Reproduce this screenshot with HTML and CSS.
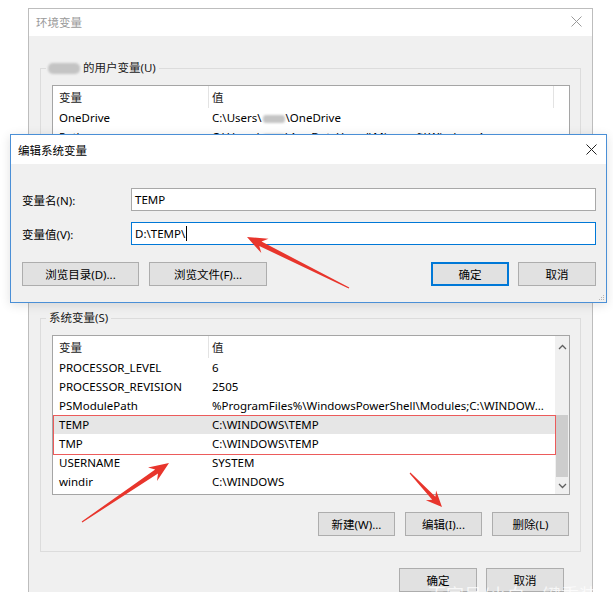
FILE: index.html
```html
<!DOCTYPE html>
<html lang="zh-CN">
<head>
<meta charset="utf-8">
<title>环境变量</title>
<link rel="stylesheet" href="styles.css">
</head>
<body>
<div class="desk">
  <div class="win-main">
    <div class="tb">
      <span class="tb-title">环境变量</span>
      <svg class="x-icon" width="11" height="11" viewBox="0 0 11 11"><path d="M0.5 0.5L10.5 10.5M10.5 0.5L0.5 10.5" stroke="#9a9a9a" stroke-width="1" fill="none"/></svg>
    </div>
    <div class="win-body">
      <fieldset class="grp grp-user">
        <legend><span class="blur blur-name"></span>的用户变量(U)</legend>
        <div class="list list-user">
          <div class="hdr hdr-user">
            <div class="hc hc-name">变量</div>
            <div class="hc hc-val">值</div>
            <div class="hc"></div>
          </div>
          <div class="row"><div class="c-name">OneDrive</div><div class="c-val">C:\Users\<span class="blur blur-user"></span>\OneDrive</div></div>
          <div class="row"><div class="c-name">Path</div><div class="c-val">C:\Users\<span class="blur blur-user"></span>\AppData\Local\Microsoft\WindowsApps;</div></div>
        </div>
        <div class="btns btns-hidden">
          <button class="btn">新建(N)...</button>
          <button class="btn">编辑(E)...</button>
          <button class="btn">删除(D)</button>
        </div>
      </fieldset>

      <fieldset class="grp grp-sys">
        <legend>系统变量(S)</legend>
        <div class="list list-sys">
          <div class="tbl">
            <div class="hdr hdr-sys">
              <div class="hc hc-name">变量</div>
              <div class="hc">值</div>
            </div>
            <div class="row"><div class="c-name">PROCESSOR_LEVEL</div><div class="c-val">6</div></div>
            <div class="row"><div class="c-name">PROCESSOR_REVISION</div><div class="c-val">2505</div></div>
            <div class="row"><div class="c-name">PSModulePath</div><div class="c-val">%ProgramFiles%\WindowsPowerShell\Modules;C:\WINDOW...</div></div>
            <div class="row sel"><div class="c-name">TEMP</div><div class="c-val">C:\WINDOWS\TEMP</div></div>
            <div class="row"><div class="c-name">TMP</div><div class="c-val">C:\WINDOWS\TEMP</div></div>
            <div class="row"><div class="c-name">USERNAME</div><div class="c-val">SYSTEM</div></div>
            <div class="row"><div class="c-name">windir</div><div class="c-val">C:\WINDOWS</div></div>
          </div>
          <div class="sb">
            <div class="sb-btn sb-up"><svg width="9" height="6" viewBox="0 0 9 6"><path d="M1 5L4.5 1.5L8 5" stroke="#606060" stroke-width="1.3" fill="none"/></svg></div>
            <div class="sb-track"><div class="sb-thumb"></div></div>
            <div class="sb-btn sb-down"><svg width="9" height="6" viewBox="0 0 9 6"><path d="M1 1L4.5 4.5L8 1" stroke="#606060" stroke-width="1.3" fill="none"/></svg></div>
          </div>
        </div>
        <div class="btns">
          <button class="btn">新建(W)...</button>
          <button class="btn">编辑(I)...</button>
          <button class="btn">删除(L)</button>
        </div>
      </fieldset>

      <div class="footer">
        <button class="btn btn-wide">确定</button>
        <button class="btn btn-wide">取消</button>
      </div>
    </div>
  </div>

  <div class="dlg">
    <div class="tb dlg-tb">
      <span>编辑系统变量</span>
      <svg class="x-icon" width="11" height="11" viewBox="0 0 11 11"><path d="M0.5 0.5L10.5 10.5M10.5 0.5L0.5 10.5" stroke="#222" stroke-width="1" fill="none"/></svg>
    </div>
    <div class="dlg-body">
      <div class="field">
        <label>变量名(N):</label>
        <div class="input">TEMP</div>
      </div>
      <div class="field">
        <label>变量值(V):</label>
        <div class="input focus">D:\TEMP\<span class="caret"></span></div>
      </div>
      <div class="dlg-btns">
        <button class="btn btn-browse">浏览目录(D)...</button>
        <button class="btn btn-browse btn-browse2">浏览文件(F)...</button>
        <button class="btn btn-default">确定</button>
        <button class="btn btn-wide">取消</button>
      </div>
    </div>
    <svg class="grip" width="7" height="7" viewBox="0 0 7 7"><g fill="#b5b5b5"><rect x="5" y="1" width="1" height="1"/><rect x="3" y="3" width="1" height="1"/><rect x="5" y="3" width="1" height="1"/><rect x="1" y="5" width="1" height="1"/><rect x="3" y="5" width="1" height="1"/><rect x="5" y="5" width="1" height="1"/></g></svg>
  </div>

  <svg class="anno" width="613" height="592" viewBox="0 0 613 592">
    <rect x="53.5" y="415.5" width="502" height="39" fill="none" stroke="#ec5b5b" stroke-width="1"/>
    <g fill="#e8352c">
      <polygon points="247,237 268.5,238.8 261.5,241.5 349.3,287.5 348.7,288.5 259.3,246 261.3,253.1"/>
      <polygon points="169,463 157,480.9 158,473.5 82.3,522.5 81.7,521.5 155.2,469.4 148,467.6"/>
      <polygon points="442,507 425.9,500.2 432.2,499.8 409.6,473.4 410.4,472.6 435.4,496.8 436.1,490.6"/>
    </g>
  </svg>

  <div class="watermark">百家号/小白一键重装系统</div>
</div>
</body>
</html>
```

FILE: styles.css
```css
html, body {
  margin: 0;
  padding: 0;
  background: #ffffff;
}

body {
  font-family: "Noto Sans", "Noto Sans CJK SC", sans-serif;
  font-size: 11.5px;
  color: #000;
}

.desk {
  position: relative;
  width: 613px;
  height: 592px;
  overflow: hidden;
  background: #ffffff;
}

/* ---------- main window ---------- */
.win-main {
  position: absolute;
  left: 28px;
  top: 8px;
  width: 565px;
  height: 620px;
  box-sizing: border-box;
  border: 1px solid #bdbdbd;
  background: #f0f0f0;
}

.tb {
  display: flex;
  align-items: center;
  justify-content: space-between;
  background: #ffffff;
}

.win-main .tb {
  height: 27px;
  padding: 0 10px 2px 7px;
  box-sizing: border-box;
  color: #9a9a9a;
}

.x-icon {
  display: block;
}

.win-body {
  padding: 24px 11px 0 11px;
}

.grp {
  margin: 0;
  min-width: 0;
  border: 1px solid #dcdcdc;
  padding: 9px 10px 12px 5px;
}

.grp-sys {
  margin-top: 11px;
  padding-bottom: 15px;
}

.grp legend {
  padding: 0 3px;
  line-height: 16px;
  color: #1a1a1a;
}

.blur {
  display: inline-block;
  background: #c4c4c4;
  filter: blur(1.2px);
  vertical-align: middle;
}

.blur-name {
  width: 32px;
  height: 11px;
  border-radius: 5px;
  margin-right: 3px;
  margin-left: -1px;
}

.blur-user {
  width: 22px;
  height: 8px;
  border-radius: 3px;
  margin: 0 1px;
}

/* ---------- list views ---------- */
.list {
  margin-left: 6px;
  border: 1px solid #a5a5a5;
  background: #ffffff;
  box-sizing: border-box;
  height: 160px;
  overflow: hidden;
}

.list-sys {
  display: flex;
}

.tbl {
  flex: 1;
  min-width: 0;
}

.hdr {
  display: grid;
  height: 22px;
  align-items: stretch;
  color: #1a1a1a;
}

.hdr-user {
  grid-template-columns: 156px 345px 1fr;
}

.hdr-sys {
  grid-template-columns: 156px 1fr;
}

.hc {
  display: flex;
  align-items: center;
  padding-left: 6px;
  padding-bottom: 1px;
  box-sizing: border-box;
}

.hc-name {
  border-right: 1px solid #e3e3e3;
}

.hc-val {
  border-right: 1px solid #e3e3e3;
}

.hdr .hc + .hc {
  padding-left: 3px;
}

.row {
  display: grid;
  grid-template-columns: 156px 1fr;
  height: 19px;
  align-items: center;
  white-space: nowrap;
}

.row.sel {
  background: #e6e6e6;
}

.c-name {
  padding-left: 6px;
  overflow: hidden;
}

.c-val {
  padding-left: 3px;
  overflow: hidden;
}

/* scrollbar */
.sb {
  width: 14px;
  background: #f0f0f0;
  display: flex;
  flex-direction: column;
}

.sb-btn {
  display: flex;
  align-items: center;
  justify-content: center;
}

.sb-up {
  height: 21px;
}

.sb-down {
  height: 17px;
}

.sb-track {
  flex: 1;
}

.sb-thumb {
  margin: 58px 1px 0 1px;
  height: 62px;
  background: #cdcdcd;
}

svg {
  display: block;
}

/* ---------- buttons ---------- */
.btn {
  font-family: inherit;
  font-size: inherit;
  color: #000;
  width: 77px;
  height: 24px;
  padding: 0;
  margin: 0;
  box-sizing: border-box;
  border: 1px solid #adadad;
  background: #e1e1e1;
  display: flex;
  align-items: center;
  justify-content: center;
}

.btns {
  display: flex;
  justify-content: flex-end;
  gap: 10px;
  margin-top: 17px;
  padding-right: 1px;
}

.btns-hidden {
  visibility: hidden;
}

.footer {
  display: flex;
  justify-content: flex-end;
  gap: 9px;
  margin-top: 16px;
  padding-right: 17px;
}

.btn-wide {
  width: 78px;
}

/* ---------- edit dialog ---------- */
.dlg {
  position: absolute;
  left: 10px;
  top: 134px;
  width: 597px;
  height: 169px;
  box-sizing: border-box;
  border: 1px solid #4a8fd6;
  background: #f0f0f0;
  box-shadow: 0 2px 10px rgba(0, 0, 0, 0.12);
}

.dlg-tb {
  height: 29px;
  padding: 0 9px 0 7px;
  box-sizing: border-box;
  color: #000;
}

.dlg-body {
  padding: 24px 10px 0 11px;
}

.field {
  display: grid;
  grid-template-columns: 109px 1fr;
  align-items: center;
  height: 23px;
}

.field + .field {
  margin-top: 11px;
}

.field label {
  color: #000;
}

.input {
  height: 23px;
  box-sizing: border-box;
  border: 1px solid #a8a8a8;
  background: #ffffff;
  padding-left: 3px;
  display: flex;
  align-items: center;
  white-space: nowrap;
}

.input.focus {
  border-color: #0078d7;
}

.caret {
  display: inline-block;
  width: 1px;
  height: 15px;
  background: #000;
  margin-left: 1px;
}

.dlg-btns {
  display: flex;
  margin-top: 17px;
  gap: 9px;
}

.btn-browse {
  width: 117px;
}

.btn-browse2 {
  width: 118px;
  margin-left: 1px;
}

.btn-default {
  width: 78px;
  margin-left: auto;
  border: 1px solid #0078d7;
  box-shadow: inset 0 0 0 1px #0078d7;
}

.grip {
  position: absolute;
  right: 1px;
  bottom: 1px;
}

/* ---------- annotations ---------- */
.anno {
  position: absolute;
  left: 0;
  top: 0;
  pointer-events: none;
}

.watermark {
  position: absolute;
  left: 428px;
  top: 582px;
  font-size: 18px;
  line-height: 24px;
  color: rgba(255, 255, 255, 0.75);
  white-space: nowrap;
  font-family: "Noto Sans CJK SC", sans-serif;
}
```
